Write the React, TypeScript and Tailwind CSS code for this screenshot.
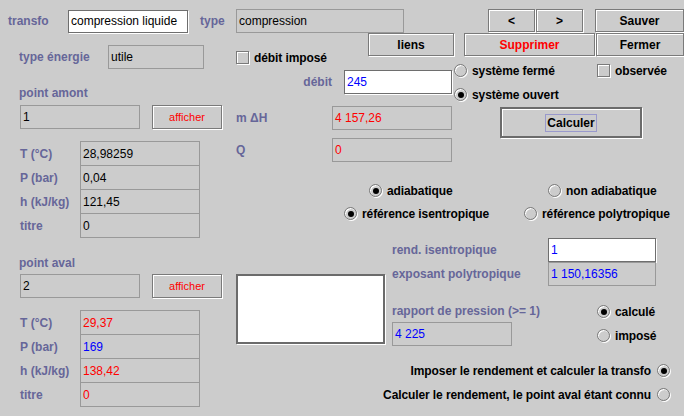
import type {ReactNode} from 'react';

const font = {fontFamily: '"Liberation Sans", Arial, sans-serif'};

function Label({children, className = ''}: {children: ReactNode; className?: string}) {
  return <div className={`text-[12px] font-bold text-[#666699] leading-[16px] whitespace-nowrap ${className}`}>{children}</div>;
}

function Field({
  value,
  white = false,
  color = 'text-black',
  className = '',
}: {
  value: string;
  white?: boolean;
  color?: string;
  className?: string;
}) {
  return (
    <div
      className={`flex items-center pl-[2px] text-[12px] whitespace-nowrap overflow-hidden ${color} ${
        white ? 'bg-white border border-[#6e6e6e] shadow-[1px_1px_0_#ffffff]' : 'bg-[#cccccc] border border-[#999999]'
      } ${className}`}
    >
      {value}
    </div>
  );
}

function Btn({children, className = '', red = false}: {children: ReactNode; className?: string; red?: boolean}) {
  return (
    <div
      className={`flex items-center justify-center text-[12px] font-bold border border-[#7a7a7a] shadow-[inset_1px_1px_0_#ffffff,1px_1px_0_#ffffff] ${
        red ? 'text-[#ff0000]' : 'text-black'
      } ${className}`}
    >
      {children}
    </div>
  );
}

function Radio({on = false}: {on?: boolean}) {
  return (
    <div className="w-[13px] h-[13px] shrink-0 rounded-full border border-[#7a7a7a] shadow-[1px_1px_0_#ffffff,inset_1px_1px_0_#ffffff] flex items-center justify-center">
      {on && <div className="w-[6px] h-[6px] rounded-full bg-black"></div>}
    </div>
  );
}

function Check() {
  return <div className="w-[13px] h-[13px] shrink-0 border border-[#7a7a7a] shadow-[1px_1px_0_#ffffff,inset_1px_1px_0_#ffffff]"></div>;
}

function Opt({children, on, check = false}: {children: ReactNode; on?: boolean; check?: boolean}) {
  return (
    <div className="flex items-center gap-[5px] h-[13px]">
      {check ? <Check /> : <Radio on={on} />}
      <span className="text-[12px] font-bold text-black whitespace-nowrap tracking-[-0.1px]">{children}</span>
    </div>
  );
}

function PointTable({rows}: {rows: {label: string; value: string; color: string}[]}) {
  return (
    <div className="flex ml-[20px]">
      <div className="flex flex-col w-[60px] pt-px">
        {rows.map((r) => (
          <div key={r.label} className="h-[24px] flex items-center">
            <Label>{r.label}</Label>
          </div>
        ))}
      </div>
      <div className="w-[120px] border border-[#999999] flex flex-col">
        {rows.map((r, i) => (
          <div
            key={r.label}
            className={`h-[23px] flex items-center pl-[2px] text-[12px] ${r.color} ${i < rows.length - 1 ? 'border-b border-[#999999] h-[24px]' : ''}`}
          >
            {r.value}
          </div>
        ))}
      </div>
    </div>
  );
}

export default function App() {
  return (
    <div className="w-[684px] h-[416px] bg-[#cccccc] overflow-hidden flex" style={font}>
      {/* colonne gauche */}
      <div className="w-[236px] shrink-0 flex flex-col pt-[9px]">
        <div className="flex items-center h-[24px]">
          <Label className="ml-[8px] w-[60px]">transfo</Label>
          <Field value="compression liquide" white className="w-[120px] h-[23px]" />
          <Label className="ml-[12px]">type</Label>
        </div>
        <div className="flex items-center h-[24px] mt-[12px]">
          <Label className="ml-[19px] w-[89px]">type énergie</Label>
          <Field value="utile" className="w-[96px] h-[24px]" />
        </div>
        <Label className="ml-[19px] mt-[16px]">point amont</Label>
        <div className="flex items-center mt-[4px] h-[24px]">
          <Field value="1" className="ml-[20px] w-[120px] h-[24px]" />
          <Btn className="ml-[12px] w-[70px] h-[24px] !font-normal !text-[11px]" red>
            afficher
          </Btn>
        </div>
        <div className="mt-[12px]">
          <PointTable
            rows={[
              {label: 'T (°C)', value: '28,98259', color: 'text-black'},
              {label: 'P (bar)', value: '0,04', color: 'text-black'},
              {label: 'h (kJ/kg)', value: '121,45', color: 'text-black'},
              {label: 'titre', value: '0', color: 'text-black'},
            ]}
          />
        </div>
        <Label className="ml-[19px] mt-[17px]">point aval</Label>
        <div className="flex items-center mt-[3px] h-[24px]">
          <Field value="2" className="ml-[20px] w-[120px] h-[24px]" />
          <Btn className="ml-[12px] w-[70px] h-[24px] !font-normal !text-[11px]" red>
            afficher
          </Btn>
        </div>
        <div className="mt-[12px]">
          <PointTable
            rows={[
              {label: 'T (°C)', value: '29,37', color: 'text-[#ff0000]'},
              {label: 'P (bar)', value: '169', color: 'text-[#0000ff]'},
              {label: 'h (kJ/kg)', value: '138,42', color: 'text-[#ff0000]'},
              {label: 'titre', value: '0', color: 'text-[#ff0000]'},
            ]}
          />
        </div>
      </div>

      {/* colonne droite */}
      <div className="flex-1 flex flex-col pt-[9px]">
        <div className="flex h-[24px]">
          <Field value="compression" className="w-[168px] h-[24px]" />
          <Btn className="ml-[84px] w-[47px] h-[23px]">&lt;</Btn>
          <Btn className="ml-[1px] w-[47px] h-[23px]">&gt;</Btn>
          <Btn className="ml-[12px] flex-1 h-[23px]">Sauver</Btn>
        </div>

        <div className="flex">
          <div className="w-[218px] shrink-0 flex flex-col">
            <div className="flex items-start">
              <div className="mt-[18px]">
                <Opt check>débit imposé</Opt>
              </div>
              <Btn className="ml-auto w-[86px] h-[23px]">liens</Btn>
            </div>
            <div className="flex items-center justify-end gap-[12px] pr-[2px] mt-[6px] h-[24px]">
              <Label>débit</Label>
              <Field value="245" white color="text-[#0000ff]" className="w-[108px] h-[24px]" />
            </div>
            <div className="flex items-center mt-[12px] h-[24px]">
              <Label className="w-[96px]">m ΔH</Label>
              <Field value="4 157,26" color="text-[#ff0000]" className="w-[120px] h-[24px]" />
            </div>
            <div className="flex items-center mt-[8px] h-[24px]">
              <Label className="w-[96px]">Q</Label>
              <Field value="0" color="text-[#ff0000]" className="w-[120px] h-[24px]" />
            </div>
          </div>
          <div className="flex-1 flex flex-col">
            <div className="flex h-[24px]">
              <Btn red className="ml-[10px] w-[131px] h-[23px]">
                Supprimer
              </Btn>
              <Btn className="ml-[1px] flex-1 h-[23px]">Fermer</Btn>
            </div>
            <div className="flex mt-[7px]">
              <div className="w-[143px]">
                <Opt>système fermé</Opt>
              </div>
              <Opt check>observée</Opt>
            </div>
            <div className="mt-[11px]">
              <Opt on>système ouvert</Opt>
            </div>
            <div className="mt-[6px] ml-[46px] w-[142px] h-[31px] border-2 border-[#6b6b6b] shadow-[inset_1px_1px_0_#ffffff,1px_1px_0_#ffffff] flex items-center justify-center">
              <span className="text-[12px] font-bold text-black border border-[#9999cc] px-px leading-[16px]">Calculer</span>
            </div>
          </div>
        </div>

        <div className="flex mt-[22px]">
          <div className="w-[312px] pl-[133px]">
            <Opt on>adiabatique</Opt>
          </div>
          <Opt>non adiabatique</Opt>
        </div>
        <div className="flex mt-[10px]">
          <div className="w-[288px] pl-[108px]">
            <Opt on>référence isentropique</Opt>
          </div>
          <Opt>référence polytropique</Opt>
        </div>

        <div className="flex mt-[18px]">
          <div className="w-[156px] shrink-0 pt-[36px]">
            <div className="w-[149px] h-[70px] bg-white border-2 border-[#6b6b6b] shadow-[1px_1px_0_#ffffff]"></div>
          </div>
          <div className="flex-1 flex flex-col">
            <div className="flex items-center h-[24px]">
              <Label className="w-[156px]">rend. isentropique</Label>
              <Field value="1" white color="text-[#0000ff]" className="w-[108px] h-[24px]" />
            </div>
            <div className="flex items-center h-[24px]">
              <Label className="w-[156px]">exposant polytropique</Label>
              <Field value="1 150,16356" color="text-[#0000ff]" className="w-[108px] h-[24px]" />
            </div>
            <div className="flex">
              <div className="w-[205px] flex flex-col">
                <Label className="mt-[17px]">rapport de pression (&gt;= 1)</Label>
                <Field value="4 225" color="text-[#0000ff]" className="mt-[3px] w-[120px] h-[24px]" />
              </div>
              <div className="flex flex-col">
                <div className="mt-[19px]">
                  <Opt on>calculé</Opt>
                </div>
                <div className="mt-[11px]">
                  <Opt>imposé</Opt>
                </div>
              </div>
            </div>
          </div>
        </div>

        <div className="flex justify-end items-center gap-[6px] pr-[14px] mt-[18px] h-[13px]">
          <span className="text-[12px] font-bold text-black whitespace-nowrap tracking-[-0.1px]">
            Imposer le rendement et calculer la transfo
          </span>
          <Radio on />
        </div>
        <div className="flex justify-end items-center gap-[6px] pr-[14px] mt-[11px] h-[13px]">
          <span className="text-[12px] font-bold text-black whitespace-nowrap tracking-[-0.1px]">
            Calculer le rendement, le point aval étant connu
          </span>
          <Radio />
        </div>
      </div>
    </div>
  );
}
